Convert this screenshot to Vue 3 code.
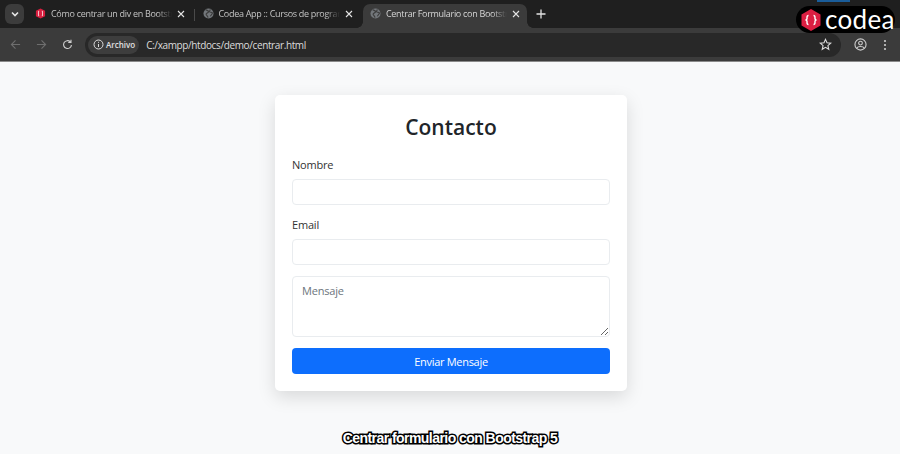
<script setup>
const tabs = [
  { title: 'Cómo centrar un div en Bootstr', icon: 'codea' },
  { title: 'Codea App :: Cursos de prograr', icon: 'globe' },
  { title: 'Centrar Formulario con Bootstra', icon: 'globe', active: true },
];
</script>

<template>
  <div class="screen">
    <header class="chrome">
      <div class="tabstrip">
        <div class="tab-search">
          <svg width="10" height="10" viewBox="0 0 10 10"><path d="M2 3.5 5 6.5 8 3.5" fill="none" stroke="#e6e6e6" stroke-width="1.6" /></svg>
        </div>
        <div v-for="tab in tabs" :key="tab.title" class="tab" :class="{ active: tab.active }">
          <svg v-if="tab.icon === 'codea'" class="favicon" viewBox="0 0 12 12">
            <path d="M6 .5 11 3v6l-5 2.500L1 9V3z" fill="#d81e3f" />
            <path d="M4.600 3.500H3.800v5h.8M7.400 3.500h.8v5h-.8" fill="none" stroke="#fff" stroke-width=".8" />
          </svg>
          <svg v-else class="favicon" viewBox="0 0 12 12">
            <circle cx="6" cy="6" r="5.500" fill="#73777b" />
            <path d="M3 2c1.500.500 3 .500 3 2S4 5 3.500 6.500 5 8 5.500 10.500M8 1.500 7 4l3.500 1.500L8 9" fill="none" stroke="#3d3d3d" stroke-width="1.300" />
          </svg>
          <span class="tab-title">{{ tab.title }}</span>
          <svg class="tab-close" width="8" height="8" viewBox="0 0 8 8"><path d="M1 1l6 6M7 1 1 7" stroke="#e4e4e4" stroke-width="1.100" /></svg>
        </div>
        <svg class="new-tab" width="10" height="10" viewBox="0 0 10 10"><path d="M5 .5v9M.5 5h9" stroke="#e3e3e3" stroke-width="1.300" /></svg>
      </div>
      <div class="toolbar">
        <svg class="nav-icon dim" viewBox="0 0 12 12"><path d="M11 6H1.500M6 1.500 1.500 6 6 10.500" fill="none" stroke="currentColor" stroke-width="1.200" /></svg>
        <svg class="nav-icon dim" viewBox="0 0 12 12"><path d="M1 6h9.500M6 1.500 10.500 6 6 10.500" fill="none" stroke="currentColor" stroke-width="1.200" /></svg>
        <svg class="nav-icon" viewBox="0 0 12 12"><path d="M10.300 6.500A4.300 4.300 0 1 1 9 3M9.800 .8v3h-3" fill="none" stroke="currentColor" stroke-width="1.200" /></svg>
        <div class="omnibox">
          <div class="chip">
            <svg width="11" height="11" viewBox="0 0 11 11"><circle cx="5.500" cy="5.500" r="4.500" fill="none" stroke="#ddd" /><path d="M5.500 5v3M5.500 2.800v1" stroke="#ddd" /></svg>
            <span>Archivo</span>
          </div>
          <span class="url">C:/xampp/htdocs/demo/centrar.html</span>
          <svg class="star" width="13" height="13" viewBox="0 0 14 14"><path d="M7 1.500 8.600 5.200l4 .3-3 2.700.9 3.900L7 10l-3.500 2.100.9-3.900-3-2.700 4-.3z" fill="none" stroke="#ddd" stroke-width="1.200" /></svg>
        </div>
        <svg class="profile" width="13" height="13" viewBox="0 0 14 14"><circle cx="7" cy="7" r="6" fill="none" stroke="#ccc" stroke-width="1.200" /><circle cx="7" cy="5.500" r="2" fill="none" stroke="#ccc" stroke-width="1.200" /><path d="M3 11c1-2.500 7-2.500 8 0" fill="none" stroke="#ccc" stroke-width="1.200" /></svg>
        <svg class="menu" width="4" height="12" viewBox="0 0 4 12"><circle cx="2" cy="2" r="1.100" fill="#ccc" /><circle cx="2" cy="6" r="1.100" fill="#ccc" /><circle cx="2" cy="10" r="1.100" fill="#ccc" /></svg>
      </div>
    </header>

    <main class="page">
      <form class="card" @submit.prevent>
        <h1>Contacto</h1>
        <label for="nombre">Nombre</label>
        <input id="nombre" type="text" />
        <label for="email" class="second">Email</label>
        <input id="email" type="email" />
        <textarea placeholder="Mensaje"></textarea>
        <button type="submit">Enviar Mensaje</button>
      </form>
      <p class="caption">Centrar formulario con Bootstrap 5</p>
    </main>

    <div class="top-bar"></div>
    <div class="brand">
      <svg width="22" height="24" viewBox="0 0 22 24">
        <path d="M11 1 20.500 6.500v11L11 23 1.500 17.500v-11z" fill="#dc1f42" />
        <path d="M8.500 7.500c-1.500 0-1.500 1-1.500 2v1.500l-1 1 1 1v1.500c0 1 0 2 1.500 2M13.500 7.500c1.500 0 1.500 1 1.500 2v1.500l1 1-1 1v1.500c0 1 0 2-1.500 2" fill="none" stroke="#fff" stroke-width="1.400" />
      </svg>
      <span>codea</span>
    </div>
  </div>
</template>

<style>
html,
body {
  margin: 0;
  overflow: hidden;
}
</style>

<style scoped>
.screen {
  position: relative;
  width: 900px;
  height: 454px;
  overflow: hidden;
  font-family: "Open Sans", "Noto Sans", sans-serif;
  background: #f8f9fa;
}
.chrome {
  height: 62px;
  background: #1f1f1f;
  border-bottom: 1px solid #8a8a8a;
  box-sizing: border-box;
}
.tabstrip {
  height: 28px;
  padding: 4px 0 0 5px;
  display: flex;
  align-items: flex-start;
  box-sizing: border-box;
}
.tab-search {
  width: 19px;
  height: 20px;
  margin-right: 4px;
  border-radius: 6px;
  background: #3c3c3c;
  display: flex;
  align-items: center;
  justify-content: center;
}
.tab {
  width: 164px;
  height: 24px;
  margin-right: 3.500px;
  padding: 0 7px 5px 7px;
  display: flex;
  align-items: center;
  gap: 5px;
  box-sizing: border-box;
  border-radius: 7px 7px 0 0;
  color: #c4c4c4;
  font-size: 9px;
  letter-spacing: -0.3px;
  position: relative;
}
.tab + .tab::before {
  content: "";
  position: absolute;
  left: -2px;
  top: 5px;
  height: 12px;
  width: 1px;
  background: #4a4a4a;
}
.tab.active {
  background: #3b3b3b;
  color: #d6d6d6;
}
.tab.active::before,
.tab.active::after {
  content: "";
  position: absolute;
  bottom: 0;
  top: auto;
  width: 6px;
  height: 6px;
}
.tab.active::before {
  left: -6px;
  background: radial-gradient(circle at 0 0, transparent 5.500px, #3b3b3b 6px);
}
.tab.active::after {
  right: -6px;
  background: radial-gradient(circle at 100% 0, transparent 5.500px, #3b3b3b 6px);
}
.favicon {
  width: 11px;
  height: 11px;
  flex: none;
}
.tab-title {
  flex: 1;
  min-width: 0;
  white-space: nowrap;
  -webkit-mask-image: linear-gradient(90deg, #000 88%, transparent);
  mask-image: linear-gradient(90deg, #000 88%, transparent);
}
.tab-close {
  flex: none;
}
.new-tab {
  margin: 5px 0 0 5.500px;
}
.toolbar {
  height: 33px;
  background: #3b3b3b;
  padding: 0 13px 0 10px;
  display: flex;
  align-items: center;
  box-sizing: border-box;
  color: #d0d0d0;
}
.nav-icon {
  width: 11px;
  height: 11px;
  margin-right: 15px;
}
.nav-icon.dim {
  color: #6e6e6e;
}
.omnibox {
  flex: 1;
  height: 24px;
  margin-left: -3px;
  margin-right: 13px;
  padding: 0 9px 0 3px;
  display: flex;
  align-items: center;
  background: #282828;
  border-radius: 12px;
}
.chip {
  height: 18px;
  padding: 0 4px 0 5px;
  display: flex;
  align-items: center;
  gap: 2px;
  border-radius: 9px;
  background: #3d3d3d;
  color: #e0e0e0;
  font-size: 8px;
  font-weight: 600;
}
.url {
  margin-left: 7px;
  font-size: 10px;
  letter-spacing: -0.38px;
  color: #dcdcdc;
  flex: 1;
}
.profile {
  margin-right: 16.500px;
}
.page {
  height: 392px;
  background: #f8f9fa;
  position: relative;
  display: flex;
  flex-direction: column;
  align-items: center;
  padding-top: 33px;
  box-sizing: border-box;
}
.card {
  width: 352px;
  height: 296px;
  margin-left: 2px;
  padding: 16px 17px 17px;
  background: #fff;
  border-radius: 5px;
  box-shadow: 0 6px 18px rgba(0, 0, 0, 0.13);
  display: flex;
  flex-direction: column;
  box-sizing: border-box;
}
h1 {
  margin: 0 0 14px;
  text-align: center;
  font-size: 21px;
  line-height: 32px;
  font-weight: 600;
  color: #212529;
}
label {
  font-size: 11px;
  letter-spacing: -0.2px;
  line-height: 16px;
  margin-bottom: 6px;
  color: #333;
}
.second {
  margin-top: 12px;
}
input,
textarea {
  display: block;
  width: 100%;
  box-sizing: border-box;
  border: 1px solid #e9ecef;
  border-radius: 4px;
  background: #fff;
  outline: none;
  font-family: inherit;
}
input {
  height: 26px;
  flex: none;
}
textarea {
  height: 61px;
  flex: none;
  margin-top: 11px;
  padding: 5px 9px;
  font-size: 11px;
  letter-spacing: -0.2px;
  line-height: 17px;
}
textarea::placeholder {
  color: #6c757d;
  opacity: 1;
}
button {
  height: 26px;
  flex: none;
  margin-top: 11px;
  border: 0;
  border-radius: 4px;
  background: #0d6efd;
  color: #fff;
  font-family: inherit;
  font-size: 11px;
  letter-spacing: -0.3px;
}
.caption {
  margin: 38px 0 0;
  font-family: "Liberation Sans", Arial, sans-serif;
  font-size: 14px;
  line-height: 18px;
  font-weight: 700;
  color: #fff;
  letter-spacing: -0.55px;
  -webkit-text-stroke: 3px #000;
  paint-order: stroke fill;
}
.top-bar {
  position: absolute;
  left: 817px;
  top: 0;
  width: 33px;
  height: 2px;
  background: #1a5d9a;
}
.brand {
  position: absolute;
  left: 796px;
  top: 6px;
  width: 99px;
  height: 27px;
  padding-left: 4px;
  box-sizing: border-box;
  background: #000;
  border-radius: 14px;
  display: flex;
  align-items: center;
  gap: 3px;
  color: #fff;
  font-family: Lato, sans-serif;
  font-size: 26px;
  letter-spacing: 0.300px;
  line-height: 27px;
}
</style>
